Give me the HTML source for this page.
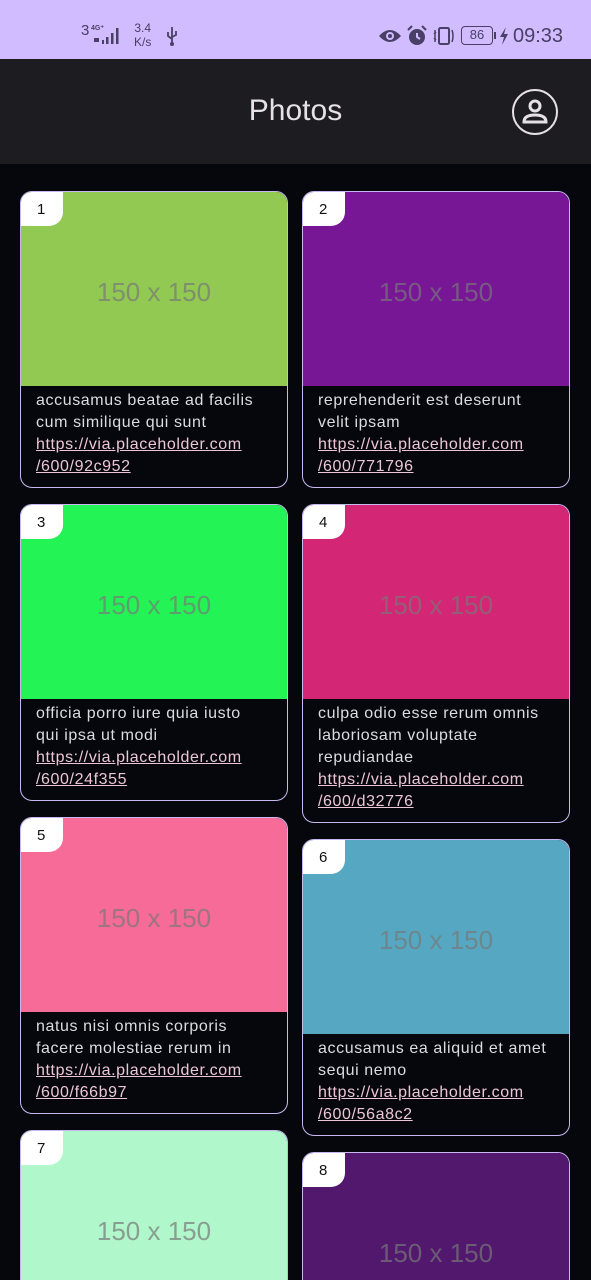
<!DOCTYPE html>
<html><head><meta charset="utf-8"><style>
*{margin:0;padding:0;box-sizing:border-box}
html,body{width:591px;height:1280px;overflow:hidden}
body{background:#05070c;font-family:"Liberation Sans",sans-serif;position:relative}
.sb{height:59px;background:#d0bcfe;position:relative;color:#4a3f66}
.hd{height:105px;background:#1d1c21;position:relative}
.hd .t{position:absolute;left:0;right:0;top:35px;text-align:center;color:#e6e1e6;font-size:30px}
.card{position:absolute;width:268px;border:1.5px solid #c9b8f0;border-radius:12px;overflow:hidden;background:#05070c}
.img{height:194px;position:relative}
.img span{position:absolute;left:0;right:0;top:85px;text-align:center;font-size:26px;color:rgba(120,120,120,.7)}
.badge{position:absolute;left:0;top:0;width:42px;height:34px;background:#fff;border-bottom-right-radius:14px;font-size:15px;color:#111;padding:9px 0 0 16px}
.txt{padding:4px 20px 9px 15px;font-size:16px;line-height:22px;color:#dcdce0;letter-spacing:0.6px}
.txt a{color:#ecc6d6;text-decoration:underline;display:block}
</style></head><body>
<div class="sb">
 <div style="position:absolute;left:81px;top:22px;font-size:15px">3</div>
 <div style="position:absolute;left:91px;top:24px;font-size:7px;font-weight:bold">4G⁺</div>
 <svg style="position:absolute;left:92px;top:26px" width="34" height="20"><g fill="#4a3f66"><rect x="10" y="14" width="2" height="4"/><rect x="14" y="11" width="2.5" height="7"/><rect x="19" y="7" width="2.5" height="11"/><rect x="24" y="2" width="2.5" height="16"/><rect x="2" y="12" width="5" height="4"/></g></svg>
 <div style="position:absolute;left:134px;top:21px;font-size:12px;line-height:14px;text-align:center">3.4<br>K/s</div>
 <svg style="position:absolute;left:165px;top:26px" width="14" height="20"><path d="M7 1V19M3 6V10L7 13M11 5V9L7 11" stroke="#4a3f66" stroke-width="1.8" fill="none"/><circle cx="7" cy="18" r="2" fill="#4a3f66"/></svg>
 <svg style="position:absolute;left:378px;top:27px" width="24" height="18"><path d="M1 9Q12-3 23 9Q12 21 1 9Z" fill="#4a3f66"/><circle cx="12" cy="9" r="4" fill="#d0bcfe"/><circle cx="12" cy="9" r="2" fill="#4a3f66"/></svg>
 <svg style="position:absolute;left:406px;top:25px" width="22" height="22"><circle cx="11" cy="12" r="8" fill="#4a3f66"/><path d="M11 8V12L14 14" stroke="#d0bcfe" stroke-width="2" fill="none"/><path d="M2 5L6 1M20 5L16 1" stroke="#4a3f66" stroke-width="2"/></svg>
 <svg style="position:absolute;left:432px;top:26px" width="24" height="20"><rect x="7" y="2" width="10" height="16" rx="1.5" fill="none" stroke="#4a3f66" stroke-width="2"/><path d="M3 4V16M20 4Q22 10 20 16M4 6L2 8M4 14L2 12" stroke="#4a3f66" stroke-width="1.5" fill="none"/></svg>
 <div style="position:absolute;left:461px;top:26px;width:32px;height:19px;border:1.5px solid #4a3f66;border-radius:4px;font-size:13px;text-align:center;line-height:16px">86</div>
 <div style="position:absolute;left:494px;top:32px;width:2px;height:7px;background:#4a3f66"></div>
 <svg style="position:absolute;left:499px;top:27px" width="10" height="18"><path d="M7 0L1 10H5L3 18L9 7H5Z" fill="#4a3f66"/></svg>
 <div style="position:absolute;left:513px;top:25px;font-size:20px">09:33</div>
</div>
<div class="hd"><div class="t">Photos</div>
 <svg style="position:absolute;left:511px;top:29px" width="48" height="48"><circle cx="24" cy="24" r="22" fill="none" stroke="#e6e1e6" stroke-width="2"/><circle cx="24" cy="18" r="5" fill="none" stroke="#e6e1e6" stroke-width="3"/><path d="M13 34Q13 27 24 27Q35 27 35 34Z" fill="none" stroke="#e6e1e6" stroke-width="3"/></svg>
</div>

<div class="card" style="left:20px;top:191px"><div class="img" style="background:#92c952"><span>150 x 150</span><div class="badge">1</div></div><div class="txt">accusamus beatae ad facilis cum similique qui sunt<a>https://via.placeholder.com</a><a>/600/92c952</a></div></div>
<div class="card" style="left:20px;top:504px"><div class="img" style="background:#24f355"><span>150 x 150</span><div class="badge">3</div></div><div class="txt">officia porro iure quia iusto qui ipsa ut modi<a>https://via.placeholder.com</a><a>/600/24f355</a></div></div>
<div class="card" style="left:20px;top:817px"><div class="img" style="background:#f66b97"><span>150 x 150</span><div class="badge">5</div></div><div class="txt">natus nisi omnis corporis facere molestiae rerum in<a>https://via.placeholder.com</a><a>/600/f66b97</a></div></div>
<div class="card" style="left:20px;top:1130px;height:150px;border-bottom:none;border-bottom-left-radius:0;border-bottom-right-radius:0"><div class="img" style="background:#b0f7cc;height:150px"><span>150 x 150</span><div class="badge">7</div></div></div>

<div class="card" style="left:302px;top:191px"><div class="img" style="background:#771796"><span>150 x 150</span><div class="badge">2</div></div><div class="txt">reprehenderit est deserunt velit ipsam<a>https://via.placeholder.com</a><a>/600/771796</a></div></div>
<div class="card" style="left:302px;top:504px"><div class="img" style="background:#d32776"><span>150 x 150</span><div class="badge">4</div></div><div class="txt">culpa odio esse rerum omnis laboriosam voluptate repudiandae<a>https://via.placeholder.com</a><a>/600/d32776</a></div></div>
<div class="card" style="left:302px;top:839px"><div class="img" style="background:#56a8c2"><span>150 x 150</span><div class="badge">6</div></div><div class="txt">accusamus ea aliquid et amet sequi nemo<a>https://via.placeholder.com</a><a>/600/56a8c2</a></div></div>
<div class="card" style="left:302px;top:1152px;height:128px;border-bottom:none;border-bottom-left-radius:0;border-bottom-right-radius:0"><div class="img" style="background:#51186e;height:128px"><span>150 x 150</span><div class="badge">8</div></div></div>
</body></html>
